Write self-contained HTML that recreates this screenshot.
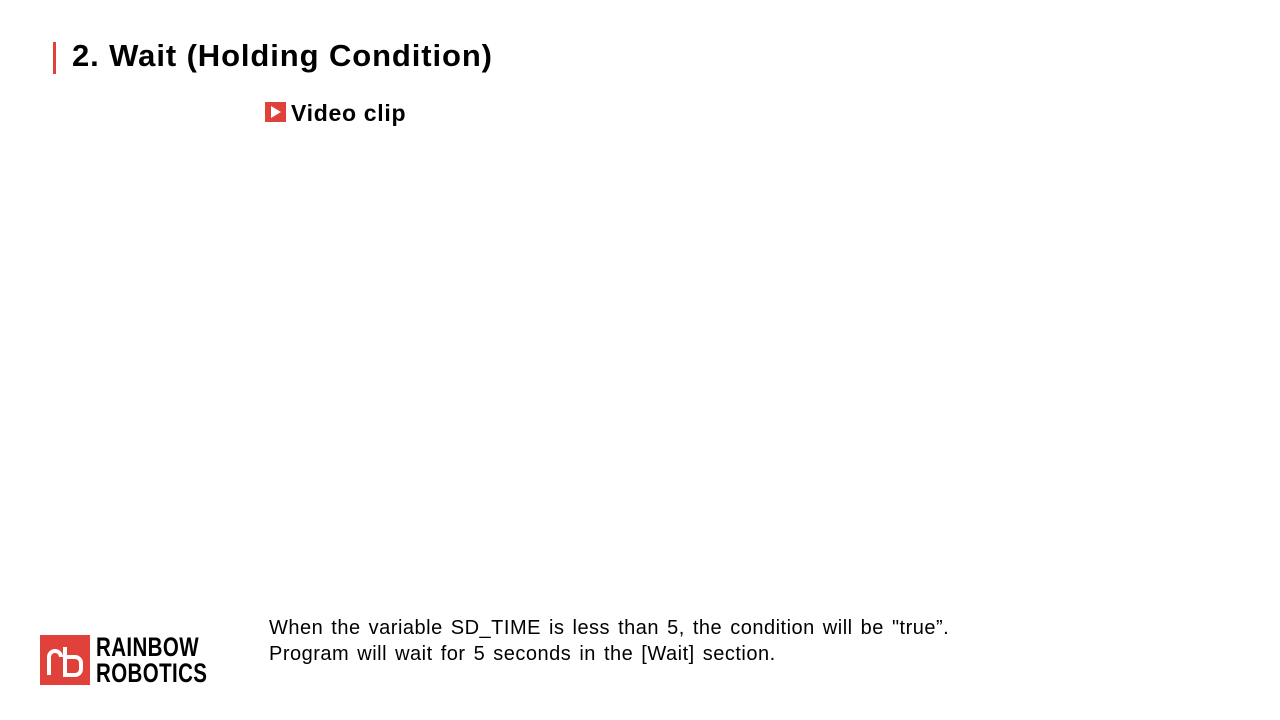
<!DOCTYPE html>
<html><head><meta charset="utf-8"><style>
body{margin:0;width:1280px;height:720px;background:#fff;position:relative;overflow:hidden;font-family:"Liberation Sans","Noto Sans CJK KR",sans-serif;color:#000}
.bar{position:absolute;left:53px;top:42px;width:3px;height:32px;background:#e0413a}
.title{position:absolute;left:72px;top:38px;font-size:31px;font-weight:bold;white-space:nowrap;letter-spacing:0.9px}
.vid{position:absolute;left:265px;top:102px;width:21px;height:20px;background:#e0413a}
.vtxt{position:absolute;left:291px;top:100px;font-size:23px;font-weight:bold;letter-spacing:0.7px}
.desc{position:absolute;left:269px;top:615px;font-size:20px;line-height:26px;white-space:nowrap;letter-spacing:0.5px;word-spacing:2px}
.logo{position:absolute;left:40px;top:635px;width:50px;height:50px;background:#e0413a}
.lt{position:absolute;left:96px;top:634px;font-size:27px;font-weight:bold;line-height:26px;transform:scaleX(0.76);transform-origin:left top;letter-spacing:0.5px}
</style></head><body>
<div class="bar"></div>
<div class="title">2. Wait (Holding Condition)</div>
<div class="vid"><svg width="21" height="20"><polygon points="6,4 16,10 6,16" fill="#fff"/></svg></div>
<div class="vtxt">Video clip</div>
<div class="desc">When the variable SD_TIME is less than 5, the condition will be "true”.<br>Program will wait for 5 seconds in the [Wait] section.</div>
<div class="logo"><svg width="50" height="50"><path d="M9 40 V22 a6 6 0 0 1 12 0 M25 12 V40 H35 a6 6 0 0 0 6 -6 V28 a6 6 0 0 0 -6 -6 H25" fill="none" stroke="#fff" stroke-width="4"/></svg></div>
<div class="lt">RAINBOW<br>ROBOTICS</div>
</body></html>
